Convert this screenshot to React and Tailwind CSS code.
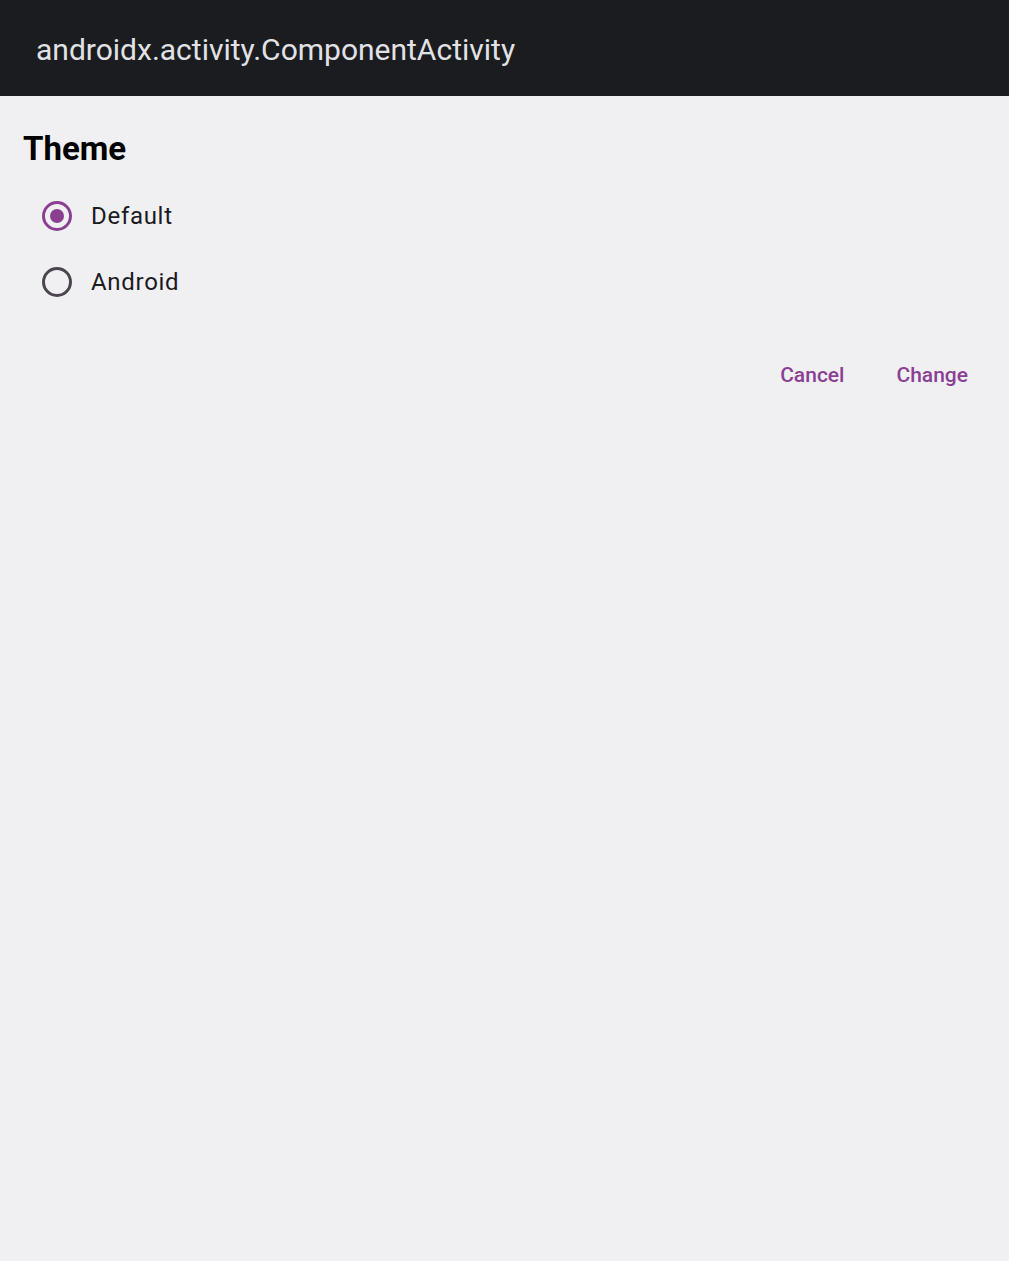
import React, { useState } from "react";

const font = { fontFamily: "Roboto, 'Noto Sans', sans-serif" };

function Radio({ checked }) {
  return (
    <span
      className={`flex h-[30px] w-[30px] items-center justify-center rounded-full border-[3px] ${
        checked ? "border-[#8b3f93]" : "border-[#4b454d]"
      }`}
    >
      {checked && <span className="h-[14px] w-[14px] rounded-full bg-[#8b3f93]" />}
    </span>
  );
}

export default function App() {
  const [theme, setTheme] = useState("Default");
  const options = ["Default", "Android"];

  return (
    <div className="min-h-[1261px] w-full bg-[#f0f0f3]" style={font}>
      <header className="flex h-[96px] items-center bg-[#1a1c1f] px-[36px] pt-[3px]">
        <h1 className="text-[30px] text-[#e2e2e6] leading-none">androidx.activity.ComponentActivity</h1>
      </header>

      <div className="px-[23px] pt-[33px]">
        <h2 className="text-[33px] font-bold leading-[40px] text-black">Theme</h2>

        <div className="mt-[14px] flex flex-col">
          {options.map(opt => (
            <button
              key={opt}
              onClick={() => setTheme(opt)}
              className="flex h-[66px] items-center gap-[19px] pl-[19px] text-left"
            >
              <Radio checked={theme === opt} />
              <span className="text-[24px] tracking-[0.7px] text-[#1b1b1f]">{opt}</span>
            </button>
          ))}
        </div>

        <div className="mt-[41px] flex h-[40px] items-center justify-end gap-[52px] pr-[18px]">
          <button className="text-[21px] font-medium text-[#8b3f93]">Cancel</button>
          <button className="text-[21px] font-medium text-[#8b3f93]">Change</button>
        </div>
      </div>
    </div>
  );
}
